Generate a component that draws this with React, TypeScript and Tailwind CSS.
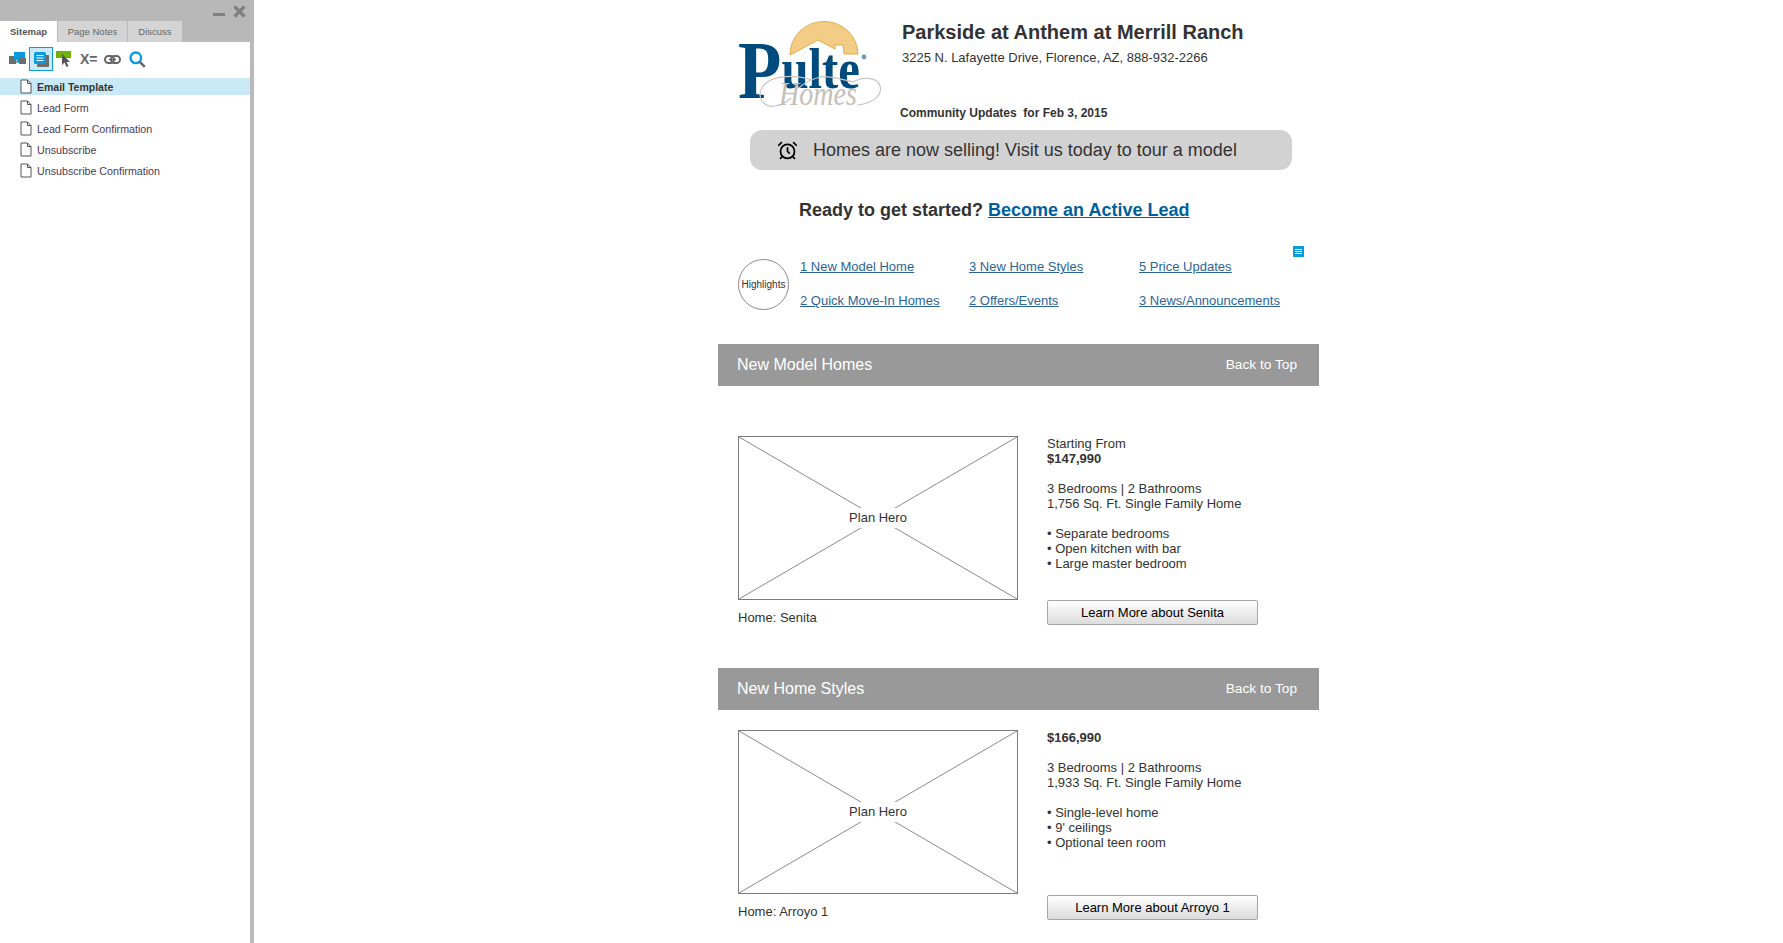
import { AlarmClock } from "lucide-react";

const pages = ["Email Template", "Lead Form", "Lead Form Confirmation", "Unsubscribe", "Unsubscribe Confirmation"];

function DocIcon() {
  return (
    <svg width="12" height="15" viewBox="0 0 12 15" className="shrink-0">
      <path d="M1 1 H7.5 L11 4.5 V14 H1 Z" fill="#fff" stroke="#555" strokeWidth="1" />
      <path d="M7.5 1 V4.5 H11" fill="none" stroke="#555" strokeWidth="1" />
    </svg>
  );
}

function Toolbar() {
  return (
    <div className="mt-[3px] flex h-[28px] items-center pl-[9px]">
      <svg width="17" height="14" viewBox="0 0 17 14" className="mr-[3px]">
        <rect x="0" y="4" width="7" height="8" fill="#6d6d6d" />
        <rect x="5" y="0" width="11" height="8" fill="#0a9bdc" />
        <rect x="8" y="8" width="5" height="2" fill="#0a9bdc" />
        <rect x="10" y="6" width="7" height="6" fill="#6d6d6d" />
        <rect x="7" y="9" width="3" height="1.5" fill="#0a9bdc" />
      </svg>
      <div className="flex h-6 w-6 items-center justify-center border border-[#0a9bdc] bg-[#cbe8f6]">
        <svg width="15" height="15" viewBox="0 0 15 15">
          <rect x="3" y="3" width="12" height="12" rx="1" fill="#6d6d6d" />
          <rect x="0" y="0" width="12" height="12" rx="1.5" fill="#0a9bdc" />
          <path d="M2.5 3.5 H9.5 M2.5 6 H9.5 M2.5 8.5 H9.5" stroke="#fff" strokeWidth="1.2" />
        </svg>
      </div>
      <svg width="17" height="18" viewBox="0 0 17 18" className="ml-[3px]">
        <rect x="0" y="1" width="15" height="7" fill="#6fb400" />
        <path d="M6 4 L6 15 L8.5 12.5 L10.5 17 L12.5 16 L10.5 12 L14 12 Z" fill="#555" />
      </svg>
      <span className="ml-[7px] w-[17px] font-['Liberation_Sans',sans-serif] text-[14px] leading-none font-bold text-[#666]">X=</span>
      <svg width="17" height="9" viewBox="0 0 17 9" className="ml-[7px]">
        <rect x="1" y="1" width="9" height="7" rx="3.5" fill="none" stroke="#666" strokeWidth="2" />
        <rect x="7" y="1" width="9" height="7" rx="3.5" fill="none" stroke="#666" strokeWidth="2" />
        <path d="M5 4.5 H12" stroke="#666" strokeWidth="1.5" />
      </svg>
      <svg width="17" height="17" viewBox="0 0 17 17" className="ml-2">
        <circle cx="6.8" cy="6.8" r="5.3" fill="none" stroke="#0a9bdc" strokeWidth="2.4" />
        <path d="M10.8 10.8 L15.8 15.8" stroke="#666" strokeWidth="2.6" />
      </svg>
    </div>
  );
}

function Sidebar() {
  return (
    <aside className="h-full w-[254px] shrink-0 border-r-4 border-[#b9b9b9] bg-white font-['Liberation_Sans',sans-serif]">
      <div className="relative h-[42px] bg-[#b8b8b8]">
        <div className="absolute left-[213px] top-[13px] h-[3px] w-3 bg-[#808080]" />
        <svg width="13" height="13" viewBox="0 0 13 13" className="absolute left-[233px] top-[5px]">
          <path d="M1.5 1.5 L11.5 11.5 M11.5 1.5 L1.5 11.5" stroke="#808080" strokeWidth="3.2" />
        </svg>
        <div className="absolute bottom-0 left-0 flex h-[21px] text-[9.5px] leading-[21px] text-[#666]">
          <div className="w-[57px] bg-white text-center font-bold text-[#555]">Sitemap</div>
          <div className="ml-px w-[69px] bg-[#d4d4d4] text-center">Page Notes</div>
          <div className="ml-px w-[54px] bg-[#d4d4d4] text-center">Discuss</div>
        </div>
      </div>
      <Toolbar />
      <ul className="mt-[5px] text-[10.7px] leading-[17px] text-[#4b3b55]">
        {pages.map((p, i) => (
          <li
            key={p}
            className={
              i === 0
                ? "mb-[4px] flex h-[17px] items-center gap-[5px] bg-[#c9e9f7] pl-5 text-[10.5px] font-bold text-[#333]"
                : "mb-[4px] flex h-[17px] items-center gap-[5px] pl-5"
            }
          >
            <DocIcon />
            <span className="mt-px">{p}</span>
          </li>
        ))}
      </ul>
    </aside>
  );
}

function Logo() {
  return (
    <svg width="145" height="92" viewBox="0 0 145 92" className="shrink-0">
      <path d="M53 35 A34 33 0 0 1 121 34 L107 34 L106 25 L98 25 L98 29 L81 20 Z" fill="#f3cd85" stroke="#e3a94c" strokeWidth="1" />
      <text x="1" y="78" textLength="122" lengthAdjust="spacingAndGlyphs" fontFamily="Liberation Serif, serif" fontWeight="700" fontSize="83" fill="#004b7d">
        P<tspan fontSize="57" dy="-10">ulte</tspan>
      </text>
      <circle cx="127" cy="37" r="2.4" fill="#6b97b8" />
      <path d="M76 60 C60 55 36 54 26 66 C18 78 28 88 38 86 C46 85 50 82 54 78" fill="none" stroke="#c9c5bf" strokeWidth="1.2" />
      <path d="M120 85 C134 84 146 76 143 66 C140 56 124 57 116 62 C106 60 90 54 80 58 C72 60 66 64 62 68" fill="none" stroke="#c9c5bf" strokeWidth="1.2" />
      <text x="42" y="85" fontFamily="Liberation Serif, serif" fontStyle="italic" fontSize="34" fill="#c4c0ba" textLength="78" lengthAdjust="spacingAndGlyphs">Homes</text>
    </svg>
  );
}

function SectionBar({ title }: { title: string }) {
  return (
    <div className="flex h-[42px] items-center justify-between bg-[#999999] pl-[19px] pr-[22px] text-white">
      <span className="text-[16px]">{title}</span>
      <span className="pt-px text-[13.7px]">Back to Top</span>
    </div>
  );
}

function PlanBox() {
  return (
    <div className="relative h-[164px] w-[280px] border border-[#7b7b7b] bg-white">
      <svg width="278" height="162" viewBox="0 0 278 162" className="block">
        <path d="M0 0 L278 162 M278 0 L0 162" stroke="#8a8a8a" strokeWidth="1" />
      </svg>
      <div className="absolute inset-0 flex items-center justify-center">
        <span className="bg-white px-[3px] text-[13px] leading-[20px] text-[#333]">Plan Hero</span>
      </div>
    </div>
  );
}

function Home({
  name,
  details,
  button,
  btnTop,
}: {
  name: string;
  details: React.ReactNode;
  button: string;
  btnTop: string;
}) {
  return (
    <div className="flex pl-5">
      <div>
        <PlanBox />
        <div className="mt-[10px] text-[13px] leading-[15px] text-[#333]">{name}</div>
      </div>
      <div className="ml-[29px] text-[13px] leading-[15px] text-[#333]">
        <div className="h-[164px]">{details}</div>
        <button className={`${btnTop} block h-[25px] w-[211px] rounded-[2px] border border-[#a6a6a6] bg-gradient-to-b from-white to-[#dcdcdc] text-center text-[13px] text-black`}>
          {button}
        </button>
      </div>
    </div>
  );
}

function Main() {
  return (
    <main className="ml-[464px] w-[601px] font-['Liberation_Sans',sans-serif] text-[#333]">
      <header className="flex pl-[19px] pt-[20px]">
        <Logo />
        <div className="ml-[20px]">
          <div className="text-[20px] font-bold leading-[24px]">Parkside at Anthem at Merrill Ranch</div>
          <div className="mt-[6px] text-[13px] leading-[16px]">3225 N. Lafayette Drive, Florence, AZ, 888-932-2266</div>
          <div className="-ml-[2px] mt-[39px] text-[12px] font-bold leading-[16px]">Community Updates&nbsp; for Feb 3, 2015</div>
        </div>
      </header>
      <div className="ml-[32px] mt-[9px] flex h-10 w-[542px] items-center rounded-[12px] bg-[#d2d2d2] pl-[27px] text-[18px]">
        <AlarmClock size={21} strokeWidth={2} className="text-black" />
        <span className="ml-[15px]">Homes are now selling! Visit us today to tour a model</span>
      </div>
      <div className="mt-[29px] pl-[81px] text-[18px] font-bold leading-[22px]">
        Ready to get started? <a className="text-[#005f9e] underline">Become an Active Lead</a>
      </div>
      <div className="relative mt-[38px] flex h-[51px] pl-5">
        <div className="flex h-[51px] w-[51px] items-center justify-center rounded-full border border-[#8a8a8a] text-[10px]">Highlights</div>
        <div className="ml-[11px] grid h-[50px] grid-cols-[169px_170px_auto] content-between text-[13px] leading-[16px] text-[#2c6496] underline">
          <a>1 New Model Home</a>
          <a>3 New Home Styles</a>
          <a>5 Price Updates</a>
          <a>2 Quick Move-In Homes</a>
          <a>2 Offers/Events</a>
          <a>3 News/Announcements</a>
        </div>
        <svg width="11" height="11" viewBox="0 0 11 11" className="absolute left-[575px] -top-[13px]">
          <rect width="11" height="11" fill="#0a9bdc" />
          <path d="M2 3.5 H9 M2 5.5 H9 M2 7.5 H9" stroke="#fff" strokeWidth="1" />
        </svg>
      </div>
      <div className="mt-[34px]"><SectionBar title="New Model Homes" /></div>
      <div className="mt-[50px]">
        <Home
          name="Home: Senita"
          button="Learn More about Senita"
          btnTop="mt-0"
          details={
            <>
              <div>Starting From</div>
              <div className="font-bold">$147,990</div>
              <div className="mt-[15px]">3 Bedrooms | 2 Bathrooms</div>
              <div>1,756 Sq. Ft. Single Family Home</div>
              <div className="mt-[15px]">• Separate bedrooms</div>
              <div>• Open kitchen with bar</div>
              <div>• Large master bedroom</div>
            </>
          }
        />
      </div>
      <div className="mt-[43px]"><SectionBar title="New Home Styles" /></div>
      <div className="mt-[20px]">
        <Home
          name="Home: Arroyo 1"
          button="Learn More about Arroyo 1"
          btnTop="mt-px"
          details={
            <>
              <div className="font-bold">$166,990</div>
              <div className="mt-[15px]">3 Bedrooms | 2 Bathrooms</div>
              <div>1,933 Sq. Ft. Single Family Home</div>
              <div className="mt-[15px]">• Single-level home</div>
              <div>• 9' ceilings</div>
              <div>• Optional teen room</div>
            </>
          }
        />
      </div>
    </main>
  );
}

export default function App() {
  return (
    <div className="flex h-[943px] w-[1783px] overflow-hidden bg-white">
      <Sidebar />
      <Main />
    </div>
  );
}
